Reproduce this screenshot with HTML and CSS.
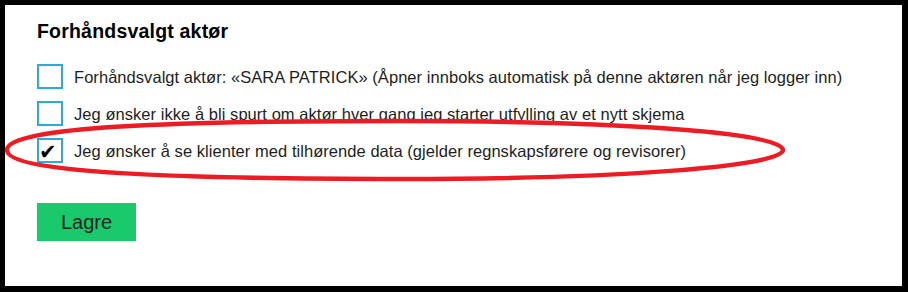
FILE: index.html
```html
<!DOCTYPE html>
<html lang="no">
<head>
<meta charset="utf-8">
<title>Forhåndsvalgt aktør</title>
<link rel="stylesheet" href="styles.css">
</head>
<body>
<div class="frame">
  <div class="panel">
    <h2 class="title">Forhåndsvalgt aktør</h2>
    <ul class="options">
      <li class="option"><span class="box"></span><span class="label">Forhåndsvalgt aktør: «SARA PATRICK» (Åpner innboks automatisk på denne aktøren når jeg logger inn)</span></li>
      <li class="option"><span class="box"></span><span class="label">Jeg ønsker ikke å bli spurt om aktør hver gang jeg starter utfylling av et nytt skjema</span></li>
      <li class="option"><span class="box checked"><span class="tick">✔</span></span><span class="label">Jeg ønsker å se klienter med tilhørende data (gjelder regnskapsførere og revisorer)</span></li>
    </ul>
    <button class="save">Lagre</button>
  </div>
  <svg class="annot" width="908" height="292" viewBox="0 0 908 292">
    <path d="M 7 150 C 7 126, 180 121, 400 121 C 610 121, 783 132, 783 150 C 783 167, 610 179, 400 179 C 180 179, 7 173, 7 150 Z" fill="none" stroke="#ed1c24" stroke-width="4.5"/>
  </svg>
</div>
</body>
</html>
```
FILE: styles.css
```css
* { box-sizing: border-box; }
html, body { margin: 0; padding: 0; }
body { width: 908px; height: 292px; background: #000; overflow: hidden; }
.frame { position: relative; width: 908px; height: 292px; padding: 5px 6px 6px 5px; }
.panel { background: #fff; height: 100%; padding: 15px 0 0 32px; font-family: "Liberation Sans", Arial, sans-serif; color: #1e1e1e; }
.title { margin: 0; font-size: 19.5px; font-weight: bold; line-height: 22px; letter-spacing: 0.2px; color: #000; }
.options { list-style: none; margin: 22px 0 0; padding: 0; display: flex; flex-direction: column; gap: 12px; }
.option { display: flex; align-items: center; gap: 11px; height: 25px; }
.box { position: relative; flex: none; width: 26px; height: 25px; border: 2px solid #29abe2; background: #fff; }
.tick { position: absolute; left: 0; top: 0; font-family: "DejaVu Sans", sans-serif; font-size: 21px; line-height: 24px; color: #000; font-weight: bold; }
.label { font-size: 16.5px; line-height: 20px; white-space: nowrap; letter-spacing: 0.05px; }
.save { display: block; margin-top: 40px; width: 99px; height: 38px; border: 0; background: #1ac96c; color: #12281c; font-family: "Liberation Sans", Arial, sans-serif; font-size: 20px; padding: 0; }
.annot { position: absolute; left: 0; top: 0; pointer-events: none; }
```
